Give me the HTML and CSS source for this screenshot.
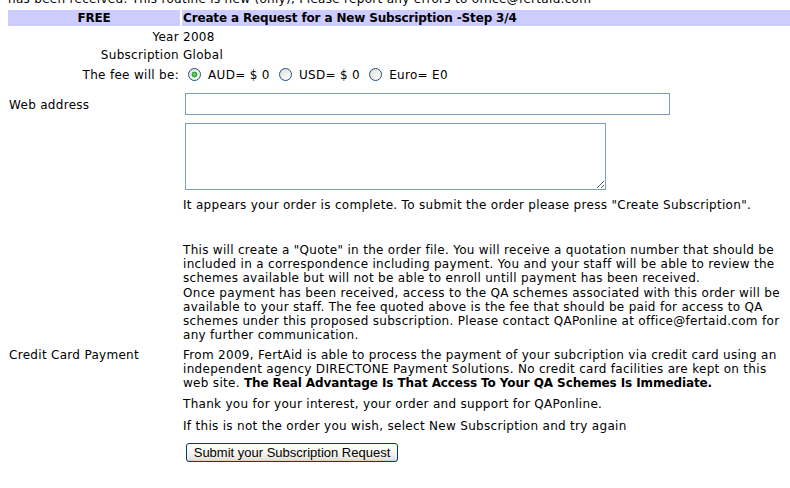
FILE: index.html
```html
<!DOCTYPE html>
<html>
<head>
<meta charset="utf-8">
<title>Create a Request for a New Subscription</title>
<link rel="stylesheet" href="styles.css">
</head>
<body>
<div class="page">
  <div class="top-note">has been received. This routine is new (only), Please report any errors to office@fertaid.com</div>

  <div class="header">
    <div class="hcell free">FREE</div>
    <div class="hcell">Create a Request for a New Subscription -Step 3/4</div>
  </div>

  <div class="row r-year">
    <div class="label right">Year</div>
    <div class="value">2008</div>
  </div>
  <div class="row r-sub">
    <div class="label right">Subscription</div>
    <div class="value">Global</div>
  </div>
  <div class="row r-fee">
    <div class="label right">The fee will be:</div>
    <div class="value nowrap"><input type="radio" name="fee" class="radio" checked> AUD= $ 0 <input type="radio" name="fee" class="radio"> USD= $ 0 <input type="radio" name="fee" class="radio"> Euro= E0</div>
  </div>
  <div class="row r-web">
    <div class="label">Web address</div>
    <div class="value"><input type="text" class="text-input"></div>
  </div>
  <div class="row r-area">
    <div class="label"></div>
    <div class="value"><textarea class="area"></textarea></div>
  </div>
  <div class="row r-complete">
    <div class="label"></div>
    <div class="value">It appears your order is complete. To submit the order please press "Create Subscription".</div>
  </div>
  <div class="row r-info">
    <div class="label"></div>
    <div class="value">
      <p class="para">This will create a "Quote" in the order file. You will receive a quotation number that should be<br>included in a correspondence including payment. You and your staff will be able to review the<br>schemes available but will not be able to enroll untill payment has been received.</p>
      <p class="para gap1">Once payment has been received, access to the QA schemes associated with this order will be<br>available to your staff. The fee quoted above is the fee that should be paid for access to QA<br>schemes under this proposed subscription. Please contact QAPonline at office@fertaid.com for<br>any further communication.</p>
    </div>
  </div>
  <div class="row r-credit">
    <div class="label">Credit Card Payment</div>
    <div class="value">
      <p class="para">From 2009, FertAid is able to process the payment of your subcription via credit card using an<br>independent agency DIRECTONE Payment Solutions. No credit card facilities are kept on this<br>web site. <b class="strong">The Real Advantage Is That Access To Your QA Schemes Is Immediate.</b></p>
      <p class="para gap7">Thank you for your interest, your order and support for QAPonline.</p>
      <p class="para gap8">If this is not the order you wish, select New Subscription and try again</p>
      <button type="button" class="submit">Submit your Subscription Request</button>
    </div>
  </div>
</div>
</body>
</html>
```

FILE: styles.css
```css
html, body {
  margin: 0;
  padding: 0;
  background: #ffffff;
}
body {
  font-family: "DejaVu Sans", Verdana, sans-serif;
  font-size: 12px;
  letter-spacing: 0.3px;
  line-height: 14px;
  color: #000000;
  overflow: hidden;
}
.page {
  padding-left: 8px;
}
.top-note {
  margin-top: -8px;
  height: 14px;
  white-space: nowrap;
}
.header {
  display: grid;
  grid-template-columns: 172px 1fr;
  column-gap: 2px;
  margin-top: 4px;
}
.hcell {
  background: #ccccff;
  height: 16px;
  line-height: 17px;
  font-weight: bold;
  letter-spacing: -0.15px;
  padding: 0 1px;
  white-space: nowrap;
}
.hcell.free {
  text-align: center;
}
.strong {
  letter-spacing: -0.1px;
}
.row {
  display: grid;
  grid-template-columns: 172px 1fr;
  column-gap: 2px;
  margin-top: 2px;
}
.label, .value {
  padding: 2px 1px 0 1px;
  white-space: nowrap;
}
.label.right {
  text-align: right;
}
.r-fee .label, .r-fee .value {
  padding-top: 4px;
  padding-bottom: 2px;
}
.radio {
  -webkit-appearance: none;
  appearance: none;
  width: 13px;
  height: 13px;
  margin: 0 3px 0 5px;
  padding: 0;
  vertical-align: top;
  border: 1px solid #1c5180;
  border-radius: 50%;
  box-sizing: border-box;
  background: linear-gradient(135deg, #dcdcd7 0%, #f2f2ef 55%, #ffffff 100%);
}
.radio:checked {
  background: radial-gradient(circle at 50% 50%, #7be27b 0, #21a121 2.6px, transparent 3.2px),
              linear-gradient(135deg, #dcdcd7 0%, #f2f2ef 55%, #ffffff 100%);
}
.r-web .label {
  padding-top: 12px;
}
.r-web .value {
  padding: 7px 1px 2px 1px;
}
.text-input {
  display: block;
  box-sizing: border-box;
  width: 485px;
  height: 22px;
  margin: 0 0 0 2px;
  border: 1px solid #7f9db9;
  padding: 2px;
  font: 11px "DejaVu Sans", Verdana, sans-serif;
  background: #ffffff;
  outline: none;
}
.r-area .value {
  padding: 4px 1px 2px 1px;
}
.area {
  display: block;
  box-sizing: border-box;
  width: 421px;
  height: 67px;
  margin: 0 0 0 2px;
  border: 1px solid #7f9db9;
  padding: 2px;
  font: 11px "DejaVu Sans", Verdana, sans-serif;
  background: #ffffff;
  outline: none;
}
.r-complete .value {
  padding-top: 4px;
}
.r-info {
  margin-top: 29px;
}
.para {
  margin: 0;
}
.gap1 {
  margin-top: 1px;
}
.r-credit {
  margin-top: 4px;
}
.gap7 {
  margin-top: 7px;
}
.gap8 {
  margin-top: 8px;
}
.submit {
  display: block;
  box-sizing: border-box;
  width: 212px;
  height: 19px;
  margin: 10px 0 0 3px;
  padding: 0;
  border: 1px solid #003c74;
  border-radius: 3px;
  background: linear-gradient(to bottom, #ffffff 0%, #f6f5f0 55%, #e6e4da 90%, #d6d0c5 100%);
  font-family: "Liberation Sans", Arial, sans-serif;
  font-size: 13px;
  letter-spacing: 0;
  line-height: 15px;
  color: #000000;
  text-align: center;
}
```
